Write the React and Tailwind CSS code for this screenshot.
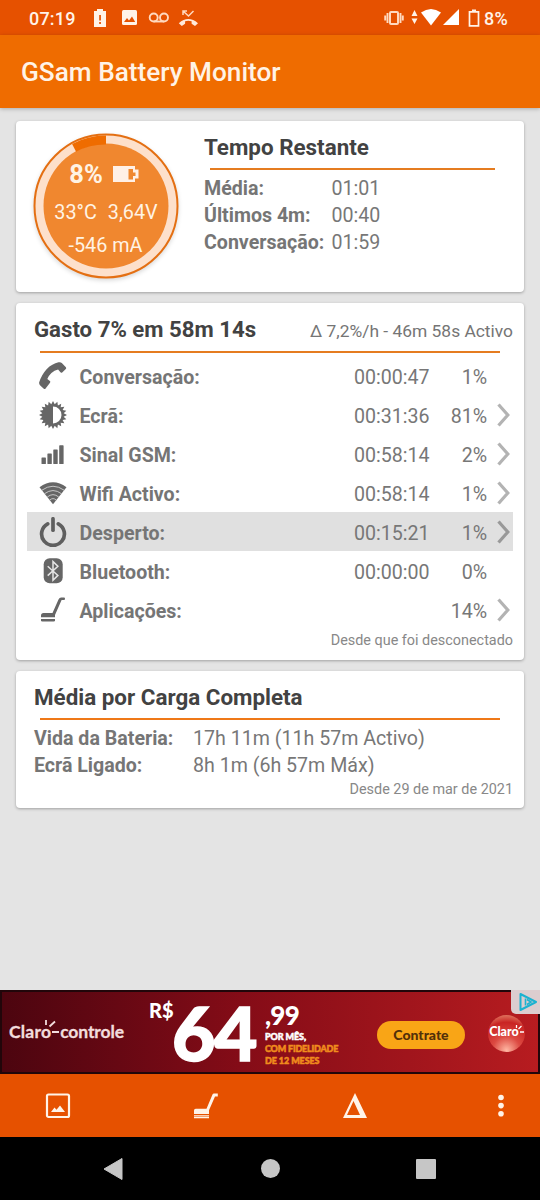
import React from "react";

const VacuumShape = () => (
  <>
    <path d="M1 18.500q0-2.500 2.500-2.500h9L18.500 2.500q.9-2 2.600-2H24q1 0 1 1.300t-1 1.300h-2.400L15 18v2.300H1z" />
    <path d="M1 22h14v1.200q0 1.300-1.300 1.300H2.300Q1 24.500 1 23.200z" />
  </>
);

const PhoneIcon = () => (
  <svg className="h-[30px] w-[30px]" viewBox="0 0 30 30" fill="#666">
    <path d="M20.500 1.300q2-.5 3.300.6l4.100 4.300q.7.900-.1 1.800l-3.600 3.400q-.9.700-1.800-.1l-2.300-2.800Q12.500 10.500 9.300 18l2.600 2q.9.800.1 1.700l-4.400 5.800q-.8 1-1.800.2L2 24.200q-1-.9-.9-2.700Q3.500 13.800 8.600 8.200 14.200 2.600 20.500 1.300z" />
  </svg>
);

const rays = Array.from({ length: 40 }, (_, i) => {
  const a = (i * Math.PI) / 20 - Math.PI / 2;
  const r = i % 2 ? 10.8 : 14;
  return `${(15 + r * Math.cos(a)).toFixed(2)},${(15 + r * Math.sin(a)).toFixed(2)}`;
}).join(" ");

const BrightnessIcon = () => (
  <svg className="h-[30px] w-[30px]" viewBox="0 0 30 30">
    <polygon points={rays} fill="#666" />
    <path d="M15 6.500a8.500 8.500 0 0 1 0 17z" fill="#fff" />
  </svg>
);

const SignalIcon = () => (
  <svg className="h-[30px] w-[30px]" viewBox="0 0 30 30" fill="#666">
    <rect x="3.500" y="18.500" width="4.400" height="6.500" rx=".6" />
    <rect x="9.400" y="14.500" width="4.400" height="10.500" rx=".6" />
    <rect x="15.300" y="10.500" width="4.400" height="14.500" rx=".6" />
    <rect x="21.200" y="6.300" width="4.400" height="18.700" rx=".6" />
  </svg>
);

const WifiIcon = () => (
  <svg className="h-[30px] w-[30px]" viewBox="0 0 30 30">
    <path d="M1.500 9.200Q15-.7 28.500 9.200L15 26.200z" fill="#666" />
    <g fill="none" stroke="#d0d0d0" strokeWidth=".9">
      <path d="M3.700 12.300Q15 4.200 26.300 12.300" />
      <path d="M6.400 15.800Q15 9.300 23.600 15.800" />
      <path d="M9.200 19.100Q15 14.200 20.800 19.100" />
      <path d="M11.600 22.200Q15 19 18.400 22.200" />
    </g>
  </svg>
);

const PowerIcon = () => (
  <svg className="h-[30px] w-[30px]" viewBox="0 0 30 30" fill="none" stroke="#5f5f5f" strokeWidth="3.700" strokeLinecap="round">
    <path d="M15 1.800V13.200" />
    <path d="M9.700 6.900a11.400 11.400 0 1 0 10.600 0" />
  </svg>
);

const BluetoothIcon = () => (
  <svg className="h-[30px] w-[30px]" viewBox="0 0 30 30">
    <rect x="5.700" y="2.300" width="19" height="25" rx="6" fill="#666" />
    <path d="M9.700 10.200l10.200 9.200-4.900 4.800V5.600l4.900 4.700-10.200 9.300" fill="none" stroke="#e6e6e6" strokeWidth="1.500" />
  </svg>
);

const VacuumIcon = () => (
  <svg className="h-[26px] w-[26px]" viewBox="0 0 26 26" fill="#666">
    <VacuumShape />
  </svg>
);

const Chevron = ({ dark }) => (
  <svg className="h-6 w-4" viewBox="0 0 16 24" fill="none" stroke={dark ? "#999" : "#b3b3b3"} strokeWidth="3.200">
    <path d="M2.500 1.500l9.300 10.500-9.300 10.500" />
  </svg>
);

const rows = [
  { icon: PhoneIcon, label: "Conversação:", time: "00:00:47", pct: "1%", more: false },
  { icon: BrightnessIcon, label: "Ecrã:", time: "00:31:36", pct: "81%", more: true },
  { icon: SignalIcon, label: "Sinal GSM:", time: "00:58:14", pct: "2%", more: true },
  { icon: WifiIcon, label: "Wifi Activo:", time: "00:58:14", pct: "1%", more: true },
  { icon: PowerIcon, label: "Desperto:", time: "00:15:21", pct: "1%", more: true, active: true },
  { icon: BluetoothIcon, label: "Bluetooth:", time: "00:00:00", pct: "0%", more: false },
  { icon: VacuumIcon, label: "Aplicações:", time: "", pct: "14%", more: true },
];

function StatusBar() {
  return (
    <div className="flex h-[35px] shrink-0 items-center bg-[#e65100] pl-[29px] text-[18px] font-medium text-[#fff3e8]">
      <span className="w-[64px] pt-px tracking-[0.2px]">07:19</span>
      <svg className="h-[20px] w-[14px]" viewBox="0 0 14 20">
        <path d="M4 1h6v2h3v16H1V3h3z" fill="#fff3e8" />
        <path d="M6.200 7h1.700v5.500H6.200zM6.200 14h1.700v2H6.200z" fill="#e65100" />
      </svg>
      <svg className="ml-[14px] h-[17px] w-[17px]" viewBox="0 0 17 17">
        <rect x="1" y="1" width="15" height="15" rx="1.500" fill="#fff3e8" />
        <path d="M3 13l3-4 2 2.500 3-4L14.200 13z" fill="#e65100" />
      </svg>
      <svg className="ml-[10px] h-[12px] w-[22px]" viewBox="0 0 22 12" fill="none" stroke="#ffd9bf" strokeWidth="1.900">
        <circle cx="5.700" cy="5.500" r="4" />
        <circle cx="16" cy="5.500" r="4" />
        <path d="M5.700 9.500H16" />
      </svg>
      <svg className="ml-[8px] h-[18px] w-[21px]" viewBox="0 0 21 18">
        <path d="M.8 14.200Q10.300 6 20 14.200l-3 2.800-3.400-2.300v-2.500q-3.300-1-6.500 0v2.500L3.800 17z" fill="#ffe9da" />
        <path d="M15.500 2l-5 5-5.500-5M5 6V2h4" fill="none" stroke="#ffd9bf" strokeWidth="1.500" />
      </svg>
      <svg className="ml-[185px] h-[16px] w-[20px]" viewBox="0 0 20 16">
        <rect x="6" y="2" width="8" height="12" rx="1" fill="none" stroke="#ffd9bf" strokeWidth="2" />
        <path d="M3.500 3v10M16.500 3v10M1.200 5.500v5M18.800 5.500v5" stroke="#ffd9bf" strokeWidth="1.900" />
      </svg>
      <svg className="ml-[7px] h-[16px] w-[7px]" viewBox="0 0 7 16" fill="#fff3e8">
        <path d="M3.500 0l3 6h-6zM3.500 14l3-5.500h-6z" />
      </svg>
      <svg className="ml-[3px] h-[18px] w-[20px]" viewBox="0 0 20 18" fill="#fff">
        <path d="M0 3.500q10-7 20 0L10 16.500z" />
      </svg>
      <svg className="ml-[1px] h-[18px] w-[18px]" viewBox="0 0 18 18" fill="#fff">
        <path d="M17 0v16H1z" />
      </svg>
      <svg className="ml-[8px] h-[18px] w-[12px]" viewBox="0 0 12 18" fill="none" stroke="#fff3e8" strokeWidth="1.700">
        <path d="M1.500 2.900h9v13.900h-9z" />
        <path d="M4 1.500h4" strokeWidth="2" />
      </svg>
      <span className="ml-[4px] pt-px tracking-[0.3px]">8%</span>
    </div>
  );
}

function Gauge() {
  return (
    <div className="relative h-[150px] w-[150px] shrink-0">
      <svg className="absolute inset-0 h-[150px] w-[150px] drop-shadow-[0_2px_2px_rgba(0,0,0,0.15)]" viewBox="0 0 150 150">
        <circle cx="75" cy="75" r="71.500" fill="#fde0cb" stroke="#e46f12" strokeWidth="2" />
        <circle cx="75" cy="75" r="62.500" fill="#f0872f" />
        <path d="M75 4.500V13.500A62 62 0 0 0 45.100 20.700L41.100 13A70.500 70.500 0 0 1 75 4.500z" fill="#ef6c00" />
      </svg>
      <div className="relative flex h-full flex-col items-center pt-[27px] text-[#fff3e4]">
        <div className="flex h-[32px] items-center gap-[9px] pr-[3px]">
          <span className="text-[25.500px] leading-[32px] font-bold">8%</span>
          <svg className="h-[18px] w-[28px]" viewBox="0 0 28 18">
            <path d="M1 1h22v3.500h3.500v9H23V17H1z" fill="#fff0e6" />
            <path d="M16.500 4H21v3.500h2.500v3.500H21V14.500h-4.500z" fill="#f0872f" />
          </svg>
        </div>
        <div className="mt-[9px] flex h-[28px] items-center gap-[11px] text-[19.800px]">
          <span>33°C</span>
          <span>3,64V</span>
        </div>
        <div className="mt-[5px] flex h-[28px] items-center pr-px text-[19.800px]">-546 mA</div>
      </div>
    </div>
  );
}

function TimeRow({ label, value }) {
  return (
    <div className="flex h-[27px] items-center text-[19.600px] whitespace-nowrap text-[#777]">
      <span className="w-[127.500px] font-bold text-[#757575]">{label}</span>
      <span>{value}</span>
    </div>
  );
}

function RemainingCard() {
  return (
    <section className="flex h-[171px] shrink-0 rounded-[4px] bg-white pt-[10px] pl-[15px] shadow-[0_1px_3px_rgba(0,0,0,0.3)]">
      <Gauge />
      <div className="ml-[23px] flex flex-1 flex-col">
        <h2 className="h-[34px] text-[22.400px] leading-[33px] font-bold text-[#424242]">Tempo Restante</h2>
        <div className="mt-[3px] mr-[29px] mb-[5px] ml-[6px] h-[2px] bg-[#e57c20]" />
        <TimeRow label="Média:" value="01:01" />
        <TimeRow label="Últimos 4m:" value="00:40" />
        <TimeRow label="Conversação:" value="01:59" />
      </div>
    </section>
  );
}

function UsageCard() {
  return (
    <section className="mt-[11px] flex h-[357px] shrink-0 flex-col rounded-[4px] bg-white pr-[11px] pl-[11px] shadow-[0_1px_3px_rgba(0,0,0,0.3)]">
      <header className="flex h-[48px] items-center justify-between pt-[6px] pl-[7px] whitespace-nowrap">
        <h2 className="text-[22.200px] font-bold text-[#424242]">Gasto 7% em 58m 14s</h2>
        <span className="pt-[3px] text-[17.400px] text-[#757575]">Δ 7,2%/h - 46m 58s Activo</span>
      </header>
      <div className="mr-[13px] mb-[3px] ml-[13px] h-[2px] shrink-0 bg-[#e57c20]" />
      {rows.map(({ icon: Icon, label, time, pct, more, active }) => (
        <div
          key={label}
          className={
            active
              ? "flex h-[39px] shrink-0 items-center bg-[#e0e0e0] pl-[11px] text-[19.600px] text-[#777]"
              : "flex h-[39px] shrink-0 items-center pl-[11px] text-[19.600px] text-[#777]"
          }
        >
          <span className="flex w-[30px] justify-center">
            <Icon />
          </span>
          <span className="ml-[11.500px] flex-1 pt-[4px] font-bold text-[#757575]">{label}</span>
          <span className="w-[76px] pt-[4px] whitespace-nowrap">{time}</span>
          <span className="w-[57px] pt-[4px] text-right">{pct}</span>
          <span className="flex w-[26px] justify-center pl-[7px]">{more && <Chevron dark={active} />}</span>
        </div>
      ))}
      <p className="mt-[2px] text-right text-[14.400px] leading-[20px] text-[#888]">Desde que foi desconectado</p>
    </section>
  );
}

function AverageCard() {
  return (
    <section className="mt-[11px] flex h-[137px] shrink-0 flex-col rounded-[4px] bg-white pr-[11px] pl-[18px] shadow-[0_1px_3px_rgba(0,0,0,0.3)]">
      <h2 className="h-[47px] pt-[10px] text-[22.400px] leading-[33px] font-bold text-[#424242]">Média por Carga Completa</h2>
      <div className="mr-[13px] mb-[5px] ml-[6px] h-[2px] shrink-0 bg-[#ef7818]" />
      <div className="flex h-[27px] shrink-0 items-center text-[19.600px] text-[#777]">
        <span className="w-[159px] font-bold text-[#757575]">Vida da Bateria:</span>
        <span>17h 11m (11h 57m Activo)</span>
      </div>
      <div className="flex h-[27px] shrink-0 items-center text-[19.600px] text-[#777]">
        <span className="w-[159px] font-bold text-[#757575]">Ecrã Ligado:</span>
        <span>8h 1m (6h 57m Máx)</span>
      </div>
      <p className="mt-px text-right text-[14.400px] leading-[20px] text-[#888]">Desde 29 de mar de 2021</p>
    </section>
  );
}

function AdBanner() {
  return (
    <div className="relative flex h-[84px] shrink-0 border-2 border-[#21060a] bg-linear-to-r from-[#4c050f] via-[#850c17] via-45% to-[#b71c20] font-['Lato','Roboto',sans-serif] text-white">
      <div className="flex w-[147px] items-center pl-[7px] text-[17.500px] font-bold whitespace-nowrap text-[#f2dddd]">
        <span className="tracking-[0.2px] [-webkit-text-stroke:0.300px_#f2dddd]">Claro</span>
        <svg className="mb-[9px] -ml-[8px] h-[16px] w-[17px] shrink-0" viewBox="0 0 17 16" fill="none" stroke="#f2dddd" strokeWidth="1.800">
          <path d="M3 5V0M6.500 6.500L12 1.500M9 12h7" />
        </svg>
        <span className="tracking-[-0.100px] [-webkit-text-stroke:0.300px_#f2dddd]">controle</span>
      </div>
      <div className="flex">
        <span className="mt-[6px] w-[23px] text-[20px] leading-[24px] font-black whitespace-nowrap">R$</span>
        <span className="w-[91px] text-[75px] leading-[80px] font-black tracking-[-1.500px] [-webkit-text-stroke:1.500px_white]">64</span>
      </div>
      <div className="flex w-[114px] flex-col pl-[2px] whitespace-nowrap">
        <span className="mt-[9px] text-[26px] leading-[28px] font-black tracking-[-0.800px]">,99</span>
        <span className="mt-[2px] text-[9px] leading-[12px] font-black tracking-[-0.100px] [-webkit-text-stroke:0.500px_white]">POR MÊS,</span>
        <span className="text-[9px] leading-[12px] font-black tracking-[-0.2px] text-[#f08c1d] [-webkit-text-stroke:0.500px_#f08c1d]">COM FIDELIDADE</span>
        <span className="text-[9px] leading-[12px] font-black tracking-[-0.1px] text-[#f08c1d] [-webkit-text-stroke:0.500px_#f08c1d]">DE 12 MESES</span>
      </div>
      <div className="flex items-center pt-[6px]">
        <span className="flex h-[28px] w-[88px] items-center justify-center rounded-full bg-[#f9a516] pb-[2px] text-[14px] font-black text-[#52300a]">Contrate</span>
      </div>
      <div className="ml-[23px] flex items-center pt-[3px]">
        <div className="flex h-[37px] w-[37px] items-center justify-center rounded-full bg-[radial-gradient(circle_at_50%_95%,#ffb7a3_0%,#dc4a42_35%,#c92423_70%,#eda080_100%)] pb-[2px] text-[12.500px] font-black text-white">
          <span>Claro</span>
          <svg className="mb-[6px] -ml-[4px] h-[9px] w-[9px] shrink-0" viewBox="0 0 9 9" fill="none" stroke="#fff" strokeWidth="1.300">
            <path d="M1.500 3V0M3.500 4l3-3M5 7h4" />
          </svg>
        </div>
      </div>
      <div className="absolute -top-[2px] -right-[2px] flex h-[24px] w-[29px] items-center justify-center rounded-bl-[5px] bg-[#dccdcf] pl-[4px]">
        <svg className="h-[20px] w-[20px]" viewBox="0 0 20 20" fill="none" stroke="#1cb2d0" strokeWidth="2">
          <path d="M2.500 2l15.500 8-15.500 8z" strokeLinejoin="round" />
          <path d="M7.500 6.500v7M9 7.500l4 2.500-4 2.500" strokeWidth="1.600" />
        </svg>
      </div>
    </div>
  );
}

function Toolbar() {
  return (
    <div className="flex h-[63px] shrink-0 items-center bg-[#e65100] pl-[45px]">
      <svg className="h-[26px] w-[26px]" viewBox="0 0 26 26">
        <rect x="2" y="1.500" width="22" height="22.500" rx="1.500" fill="none" stroke="#fff3e8" strokeWidth="2.200" />
        <path d="M6 19l3.500-4.500 2 2.200 3.500-4.200 5 6.500z" fill="#fff3e8" />
      </svg>
      <svg className="ml-[122px] h-[26px] w-[26px]" viewBox="0 0 26 26" fill="#fff3e8">
        <path d="M1 17.500q0-1.700 1.700-1.700H13.500L19.500 1.500q.4-1 1.500-1H24.800v3H22L16 17.300v3.600H1z" />
        <path d="M1 21.900h15v.8H1zM1 23.600h15v1.600H1z" />
      </svg>
      <svg className="ml-[123px] h-[26px] w-[26px]" viewBox="0 0 26 26" fill="#fff3e8" fillRule="evenodd">
        <path d="M13 0L25 25H1zM11.500 8L5 22H18z" />
      </svg>
      <svg className="ml-[126px] h-[26px] w-[14px]" viewBox="0 0 14 26" fill="#fff3e8">
        <circle cx="7" cy="4.500" r="2.800" />
        <circle cx="7" cy="12.600" r="2.800" />
        <circle cx="7" cy="20.700" r="2.800" />
      </svg>
    </div>
  );
}

function NavBar() {
  return (
    <div className="flex h-[63px] shrink-0 items-center bg-black pl-[103px]">
      <svg className="h-[24px] w-[20px]" viewBox="0 0 20 24">
        <path d="M19 1.500v21L1 12z" fill="#c6c6c6" stroke="#c6c6c6" strokeLinejoin="round" />
      </svg>
      <div className="ml-[138px] h-[19px] w-[19px] rounded-full bg-[#c6c6c6]" />
      <div className="ml-[136px] h-[20px] w-[20px] rounded-[1px] bg-[#c6c6c6]" />
    </div>
  );
}

export default function App() {
  return (
    <div className="flex h-[1200px] w-[540px] flex-col overflow-hidden bg-[#e4e4e4] font-['Roboto',sans-serif]">
      <StatusBar />
      <header className="z-10 flex h-[73px] shrink-0 items-center bg-[#ef6c00] pt-[3px] pl-[21px] shadow-[0_1px_4px_rgba(0,0,0,0.25)]">
        <h1 className="text-[26.200px] font-medium text-[#fff3e6]">GSam Battery Monitor</h1>
      </header>
      <main className="flex flex-1 flex-col px-[16px] pt-[13px]">
        <RemainingCard />
        <UsageCard />
        <AverageCard />
      </main>
      <AdBanner />
      <Toolbar />
      <NavBar />
    </div>
  );
}
